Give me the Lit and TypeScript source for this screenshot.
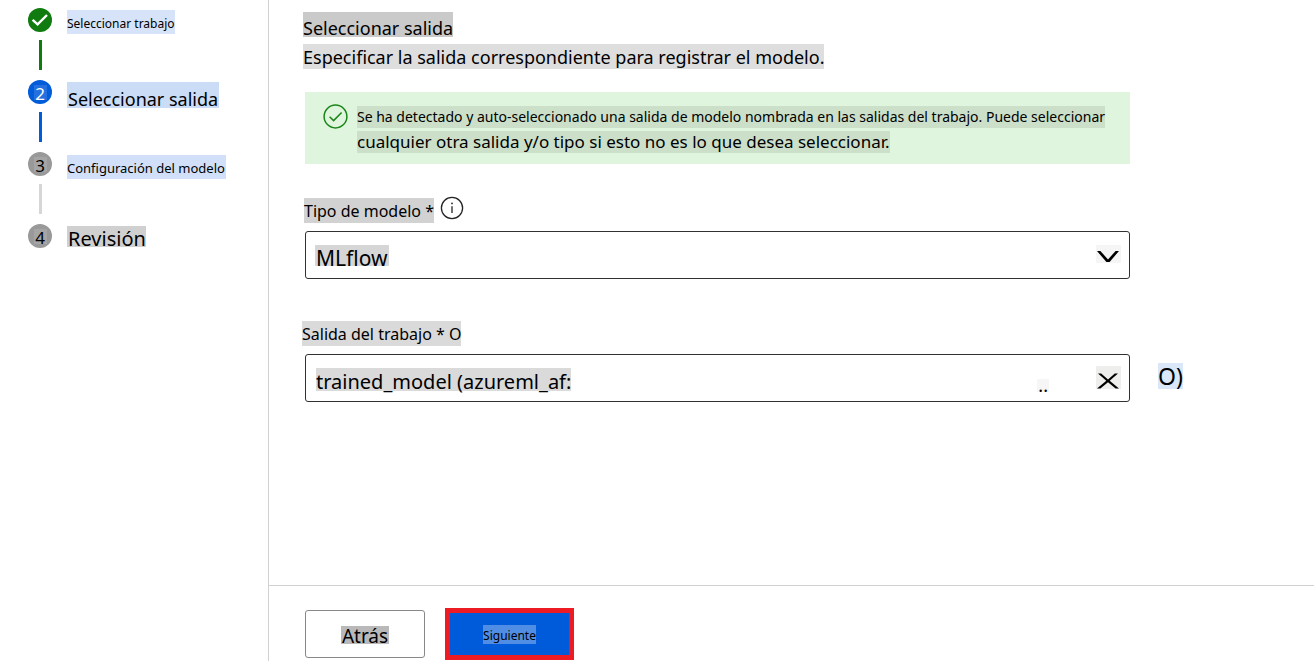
import { LitElement, html, css, svg } from "lit";
import { customElement, property } from "lit/decorators.js";
import { classMap } from "lit/directives/class-map.js";

type StepState = "done" | "current" | "pending";

interface Step {
  label: string;
  state: StepState;
  size: string;
}

const steps: Step[] = [
  { label: "Seleccionar trabajo", state: "done", size: "small" },
  { label: "Seleccionar salida", state: "current", size: "large" },
  { label: "Configuración del modelo", state: "pending", size: "medium" },
  { label: "Revisión", state: "pending", size: "last" },
];

@customElement("wizard-steps")
export class WizardSteps extends LitElement {
  @property({ attribute: false }) steps: Step[] = [];

  static styles = css`
    :host {
      display: block;
      color: #000;
    }
    ol {
      list-style: none;
      margin: 0;
      padding: 8px 0 0 28px;
    }
    .step {
      display: grid;
      grid-template-columns: 24px 1fr;
      column-gap: 15px;
      align-items: start;
      height: 72px;
    }
    .rail {
      display: flex;
      flex-direction: column;
      align-items: center;
      gap: 8px;
    }
    .dot {
      box-sizing: border-box;
      width: 24px;
      height: 24px;
      border-radius: 50%;
      display: grid;
      place-items: center;
      padding-top: 4px;
      font-size: 17px;
      line-height: 20px;
      background: #999 linear-gradient(#a5a5a5, #a5a5a5) 6px 5px / 13px 15px no-repeat;
    }
    .done .dot {
      background: #107c10;
      padding: 0;
    }
    .current .dot {
      background: #015cda linear-gradient(#2470df, #2470df) 6px 5px / 13px 15px no-repeat;
      color: #fff;
    }
    .line {
      width: 3px;
      height: 30px;
      background: #d6d6d6;
    }
    .done .line {
      background: #107c10;
    }
    .current .line {
      background: #015cda;
    }
    .label {
      justify-self: start;
      white-space: nowrap;
      margin-top: 2px;
    }
    .small {
      font-size: 12px;
      line-height: 20px;
      padding-top: 4px;
      background: #d6e3f9;
    }
    .large {
      font-size: 18px;
      line-height: 18px;
      padding: 8px 1px 0;
      background: #cadcf6;
    }
    .medium {
      font-size: 13px;
      line-height: 22px;
      padding: 2px 1px 0 0;
      margin-top: 3px;
      background: #d1e0f8;
    }
    .last {
      font-size: 20px;
      line-height: 16px;
      padding: 5px 0 0 1px;
      background: #d0d0d0;
    }
  `;

  render() {
    return html`
      <nav aria-label="Pasos">
        <ol>
          ${this.steps.map(
            (step, i) => html`
              <li class=${classMap({ step: true, [step.state]: true })}>
                <div class="rail">
                  <span class="dot">
                    ${step.state === "done"
                      ? html`<svg width="24" height="24" viewBox="0 0 24 24" aria-hidden="true">
                          <path d="M4.6 11.8 L9.6 16.4 L19 7" fill="none" stroke="#fff" stroke-width="2.4" />
                        </svg>`
                      : i + 1}
                  </span>
                  ${i < this.steps.length - 1 ? html`<span class="line"></span>` : null}
                </div>
                <span class="label ${step.size}">${step.label}</span>
              </li>
            `
          )}
        </ol>
      </nav>
    `;
  }
}

const circleCheck = svg`
  <circle cx="12.5" cy="12.5" r="11.4" fill="none" stroke="#1a861a" stroke-width="1.5" />
  <path d="M6.6 12.7 L10.6 16.6 L18.6 8.4" fill="none" stroke="#1a861a" stroke-width="1.5" />
`;

@customElement("app-root")
export class AppRoot extends LitElement {
  static styles = css`
    :host {
      display: grid;
      grid-template-columns: 268px minmax(0, 1fr);
      min-height: 100vh;
      background: #fff;
      color: #000;
      font-family: "Noto Sans", "Open Sans", sans-serif;
    }
    * {
      box-sizing: border-box;
    }
    main {
      display: flex;
      flex-direction: column;
      border-left: 1px solid #d1d1d1;
    }
    .content {
      flex: 1;
      display: grid;
      grid-template-columns: minmax(0, 1fr) 148px;
      column-gap: 28px;
      align-content: start;
      padding: 12px 8px 0 36px;
    }
    .content > * {
      grid-column: 1;
    }
    header {
      display: flex;
      flex-direction: column;
      align-items: flex-start;
      margin-left: -2px;
      gap: 7px;
    }
    h1,
    p {
      margin: 0;
      font-weight: 400;
    }
    h1 {
      font-size: 18px;
      line-height: 17px;
      padding-top: 8px;
      background: #cacaca;
    }
    .lead {
      font-size: 18px;
      line-height: 23px;
      padding-top: 2px;
      background: #dedede;
    }
    .notice {
      display: flex;
      align-items: flex-start;
      gap: 9px;
      margin-top: 23px;
      padding: 12px 16px 11px 18px;
      background: #dff5dd;
    }
    .notice svg {
      flex: none;
    }
    .notice-text {
      display: flex;
      flex-direction: column;
      align-items: flex-start;
      gap: 3px;
      padding-top: 2px;
    }
    .notice-text span {
      line-height: 22px;
      background: #cbdfc9;
    }
    .first {
      font-size: 14px;
    }
    .second {
      font-size: 17px;
    }
    .field-head {
      display: flex;
      align-items: flex-start;
      gap: 6px;
    }
    .type-head {
      margin: 32px 0 0 -1px;
      height: 35px;
    }
    .output-head {
      margin: 42px 0 0 -3px;
      height: 33px;
    }
    label {
      font-size: 16px;
      line-height: 23px;
      padding-top: 2px;
      background: #d2d2d2;
    }
    .type-head label {
      margin-top: 2px;
    }
    .output-head label {
      background: #dadada;
    }
    .icon-button {
      display: grid;
      place-items: center;
      border: 0;
      padding: 0;
      background: none;
    }
    .box {
      display: grid;
      grid-template-columns: minmax(0, 1fr) 33px;
      align-items: center;
      height: 48px;
      border: 1px solid #323130;
      border-radius: 3px;
    }
    select,
    input {
      grid-area: 1 / 1;
      appearance: none;
      width: 100%;
      height: 46px;
      border: 0;
      outline: 0;
      margin: 0;
      padding: 6px 10px 0;
      font: 20px / 28px "Noto Sans", "Open Sans", sans-serif;
      color: #000;
      background-color: transparent;
      background-repeat: no-repeat;
    }
    select {
      grid-area: 1 / 1 / 2 / 3;
      font-size: 21px;
      background-image: linear-gradient(#d6d6d6, #d6d6d6);
      background-position: 9px 13px;
      background-size: 74px 21px;
    }
    input {
      background-image: linear-gradient(#dadada, #dadada);
      background-position: 10px 13px;
      background-size: 255px 23px;
    }
    .glyph {
      grid-area: 1 / 2;
      width: 25px;
      height: 23px;
      margin-bottom: 2px;
      background: #eeeeec;
    }
    .chevron {
      height: 18px;
      background: #f5f5f5;
      pointer-events: none;
    }
    .trail {
      grid-area: 1 / 1;
      justify-self: end;
      margin: 14px 47px 0 0;
      padding: 0 1px;
      font-size: 18px;
      line-height: 12px;
      height: 13px;
      background: #f6f6f6;
    }
    .content > .refresh {
      grid-column: 2;
      justify-self: start;
      align-self: start;
      margin-top: 9px;
      height: 26px;
      color: #000;
      font: 23px / 26px "Noto Sans", "Open Sans", sans-serif;
      background: #dae7f8;
    }
    footer {
      display: flex;
      align-items: flex-start;
      gap: 20px;
      height: 76px;
      padding: 22px 36px 0;
      border-top: 1px solid #d1d1d1;
    }
    footer button {
      display: grid;
      place-items: center;
      padding: 0;
      color: #000;
      font-family: inherit;
    }
    .back {
      width: 120px;
      height: 48px;
      margin-top: 2px;
      border: 1px solid #8a8886;
      border-radius: 3px;
      background: #fff;
      font-size: 19px;
    }
    .back span {
      margin-top: 2px;
      padding: 2px 1px 0;
      line-height: 16px;
      background: #b9b9b9;
    }
    .next {
      width: 129px;
      height: 52px;
      border: 5px solid #ed1c24;
      background: #005bda;
      font-size: 12px;
    }
    .next span {
      line-height: 17px;
      padding-top: 2px;
      background: #508de5;
    }
  `;

  render() {
    return html`
      <wizard-steps .steps=${steps}></wizard-steps>
      <main>
        <section class="content">
          <header>
            <h1>Seleccionar salida</h1>
            <p class="lead">Especificar la salida correspondiente para registrar el modelo.</p>
          </header>

          <div class="notice" role="status">
            <svg width="25" height="25" viewBox="0 0 25 25" aria-hidden="true">${circleCheck}</svg>
            <div class="notice-text">
              <span class="first"
                >Se ha detectado y auto-seleccionado una salida de modelo nombrada en las salidas del trabajo. Puede
                seleccionar</span
              >
              <span class="second">cualquier otra salida y/o tipo si esto no es lo que desea seleccionar.</span>
            </div>
          </div>

          <div class="field-head type-head">
            <label for="model-type">Tipo de modelo *</label>
            <button class="icon-button" type="button" aria-label="Información">
              <svg width="24" height="24" viewBox="0 0 24 24" aria-hidden="true">
                <circle cx="12" cy="12" r="10.6" fill="none" stroke="#242424" stroke-width="1.3" />
                <path d="M12 10.2 V17" stroke="#242424" stroke-width="1.3" />
                <circle cx="12" cy="7.4" r="0.9" fill="#242424" />
              </svg>
            </button>
          </div>
          <div class="box">
            <select id="model-type">
              <option>MLflow</option>
            </select>
            <svg class="glyph chevron" width="25" height="18" viewBox="0 0 25 18" aria-hidden="true">
              <path d="M1 6 H4.4 L12 14.4 L19.6 6 H23 L13.6 17 H10.4 Z" fill="#000" />
            </svg>
          </div>

          <div class="field-head output-head">
            <label for="job-output">Salida del trabajo * O</label>
          </div>
          <div class="box">
            <input id="job-output" type="text" value="trained_model (azureml_af:" />
            <span class="trail">..</span>
            <button class="icon-button glyph" type="button" aria-label="Borrar">
              <svg width="25" height="23" viewBox="0 0 25 23" aria-hidden="true">
                <path
                  d="M2 7.5 H5.2 L12 13.4 L18.8 7.5 H22 L13.7 14.8 L23 22.6 H19.6 L12 16.3 L4.4 22.6 H1 L10.3 14.8 Z"
                  fill="#000"
                />
              </svg>
            </button>
          </div>
          <button class="icon-button refresh" type="button">O)</button>
        </section>

        <footer>
          <button class="back" type="button"><span>Atrás</span></button>
          <button class="next" type="button"><span>Siguiente</span></button>
        </footer>
      </main>
    `;
  }
}
